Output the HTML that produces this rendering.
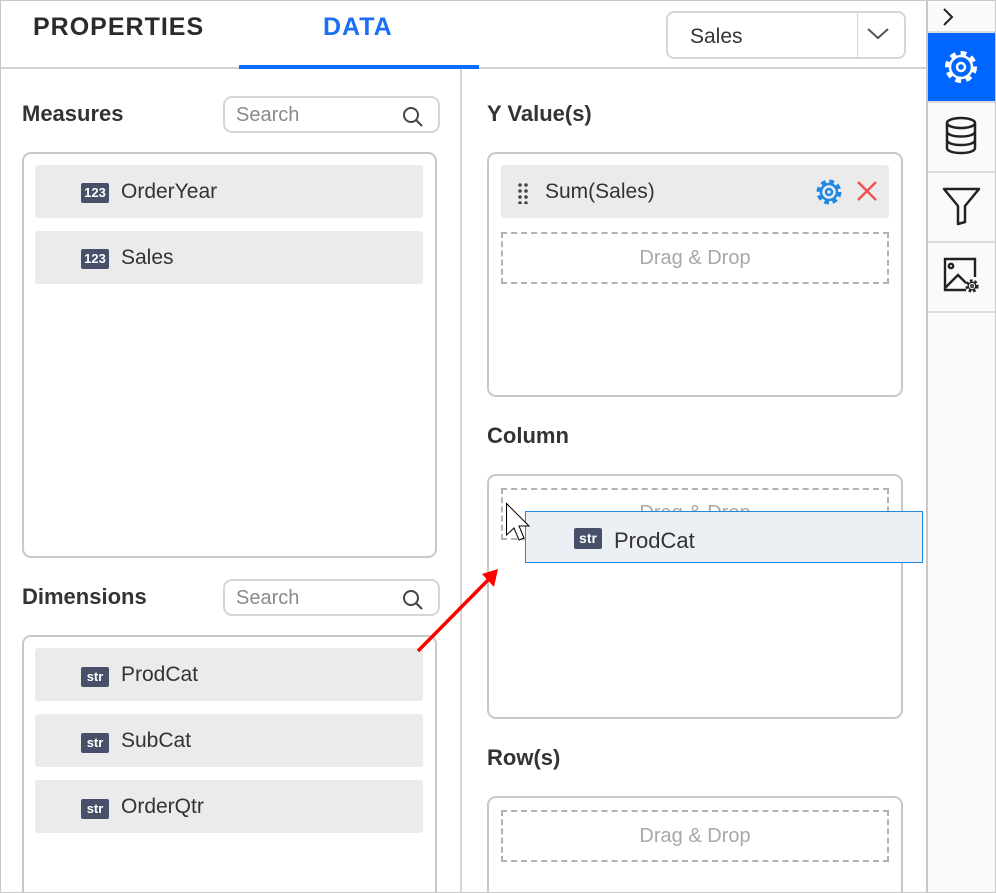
<!DOCTYPE html>
<html style="width:996px;height:893px;overflow:hidden"><head><meta charset="utf-8"><style>
*{box-sizing:border-box;margin:0;padding:0}
body{width:996px;height:893px;overflow:hidden;background:#fff;font-family:"Liberation Sans",Roboto,sans-serif;color:#333;position:relative}
.a{position:absolute}
.frame{left:0;top:0;width:996px;height:893px;border:1px solid #c8c8c8;z-index:5;pointer-events:none}
.tab{font-size:25px;font-weight:bold;letter-spacing:1px;top:13px}
.h{font-size:22px;font-weight:bold;color:#333}
.search{width:217px;height:37px;border:2px solid #d6d6d6;border-radius:9px;font-size:20px;color:#8a8a8a;padding:6px 0 0 11px}
.box{border:2px solid #c8c8c8;border-radius:9px}
.item{background:#ebebeb;border-radius:3px;height:53px;font-size:21px;color:#333;padding:15px 0 0 86px}
.ic{position:absolute;left:46px;top:19px;width:28px;height:20px;background:#475068;color:#fff;font-size:13px;font-weight:bold;text-align:center;line-height:20px;border-radius:2px}
.dd{border:2px dashed #b2b2b2;height:52px;font-size:20px;color:#a8a8a8;text-align:center;line-height:48px}
.side{left:926px;top:0;width:70px;height:893px;background:#fafafa;border-left:2px solid #c8c8c8}
.sl{left:0;width:68px;height:2px;background:#dcdcdc}
</style></head><body>
<div class="a frame"></div>
<div class="a" style="left:1px;top:67px;width:925px;height:2px;background:#d2d2d2"></div>
<div class="a tab" style="left:33px;color:#2b2b2b">PROPERTIES</div>
<div class="a tab" style="left:323px;color:#1a6ff5">DATA</div>
<div class="a" style="left:239px;top:65px;width:240px;height:4px;background:#0d6efd"></div>
<div class="a" style="left:666px;top:11px;width:240px;height:48px;border:2px solid #d6d6d6;border-radius:8px;font-size:21px;color:#333;padding:12px 0 0 22px">Sales
<div class="a" style="left:189px;top:0;width:1px;height:44px;background:#d6d6d6"></div>
<svg class="a" style="left:198px;top:13px" width="24" height="16" viewBox="0 0 24 16"><path d="M2 3 L12 12 L22 3" fill="none" stroke="#555" stroke-width="2"/></svg></div>
<div class="a" style="left:460px;top:69px;width:2px;height:824px;background:#d6d6d6"></div>

<div class="a h" style="left:22px;top:101px">Measures</div>
<div class="a search" style="left:223px;top:96px">Search<svg class="a" style="left:177px;top:8px" width="22" height="22" viewBox="0 0 22 22"><circle cx="9" cy="9" r="7" fill="none" stroke="#444" stroke-width="2"/><path d="M14 14 L20 20" stroke="#444" stroke-width="2"/></svg></div>
<div class="a box" style="left:22px;top:152px;width:415px;height:406px"></div>
<div class="a item" style="left:35px;top:165px;width:388px"><span class="ic" style="top:18px">123</span>OrderYear</div>
<div class="a item" style="left:35px;top:231px;width:388px"><span class="ic" style="top:18px">123</span>Sales</div>

<div class="a h" style="left:22px;top:584px">Dimensions</div>
<div class="a search" style="left:223px;top:579px">Search<svg class="a" style="left:177px;top:8px" width="22" height="22" viewBox="0 0 22 22"><circle cx="9" cy="9" r="7" fill="none" stroke="#444" stroke-width="2"/><path d="M14 14 L20 20" stroke="#444" stroke-width="2"/></svg></div>
<div class="a box" style="left:22px;top:635px;width:415px;height:258px;border-bottom:none;border-radius:9px 9px 0 0"></div>
<div class="a item" style="left:35px;top:648px;width:388px"><span class="ic">str</span>ProdCat</div>
<div class="a item" style="left:35px;top:714px;width:388px"><span class="ic">str</span>SubCat</div>
<div class="a item" style="left:35px;top:780px;width:388px"><span class="ic">str</span>OrderQtr</div>

<div class="a h" style="left:487px;top:101px">Y Value(s)</div>
<div class="a box" style="left:487px;top:152px;width:416px;height:245px"></div>
<div class="a item" style="left:501px;top:165px;width:388px;padding-left:44px">Sum(Sales)
<svg class="a" style="left:16px;top:17px" width="12" height="22" viewBox="0 0 12 22"><g fill="#444"><circle cx="3" cy="3" r="1.8"/><circle cx="9" cy="3" r="1.8"/><circle cx="3" cy="9" r="1.8"/><circle cx="9" cy="9" r="1.8"/><circle cx="3" cy="15" r="1.8"/><circle cx="9" cy="15" r="1.8"/><circle cx="3" cy="21" r="1.8"/><circle cx="9" cy="21" r="1.8"/></g></svg>
<svg class="a" style="left:314px;top:13px" width="28" height="28" viewBox="0 0 28 28"><circle cx="14" cy="14" r="10" fill="none" stroke="#1e88e5" stroke-width="5" stroke-dasharray="4.4 3.45"/><circle cx="14" cy="14" r="8" fill="none" stroke="#1e88e5" stroke-width="2.5"/><circle cx="14" cy="14" r="3" fill="none" stroke="#1e88e5" stroke-width="2.5"/></svg>
<svg class="a" style="left:355px;top:15px" width="22" height="22" viewBox="0 0 22 22"><path d="M2 2 L20 20 M20 2 L2 20" stroke="#f05050" stroke-width="2.4"/></svg></div>
<div class="a dd" style="left:501px;top:232px;width:388px">Drag &amp; Drop</div>

<div class="a h" style="left:487px;top:423px">Column</div>
<div class="a box" style="left:487px;top:474px;width:416px;height:245px"></div>
<div class="a dd" style="left:501px;top:488px;width:388px;overflow:hidden;line-height:46px">Drag &amp; Drop</div>
<div class="a" style="left:525px;top:511px;width:398px;height:52px;background:#eceff3;border:1px solid #1e88e5;font-size:22px;color:#333;padding:16px 0 0 88px"><span class="ic" style="left:48px;top:16px;width:28px;height:21px;font-size:14px">str</span>ProdCat</div>
<svg class="a" style="left:505px;top:502px" width="28" height="40" viewBox="0 0 28 40"><path d="M1.5 1.5 L1.5 33 L9 26 L14 38 L19 36 L14 24 L24 24 Z" fill="#fff" stroke="#000" stroke-width="1"/></svg>
<svg class="a" style="left:410px;top:560px" width="95" height="100" viewBox="0 0 95 100"><path d="M8 91 L78 20" stroke="#f00" stroke-width="3.5"/><path d="M88 9 L72 14 L84 27 Z" fill="#f00"/></svg>

<div class="a h" style="left:487px;top:745px">Row(s)</div>
<div class="a box" style="left:487px;top:796px;width:416px;height:97px;border-bottom:none;border-radius:9px 9px 0 0"></div>
<div class="a dd" style="left:501px;top:810px;width:388px">Drag &amp; Drop</div>

<div class="a side">
<svg class="a" style="left:13px;top:7px" width="14" height="20" viewBox="0 0 14 20"><path d="M3 2 L11 10 L3 18" fill="none" stroke="#222" stroke-width="2"/></svg>
<div class="a sl" style="top:31px"></div>
<div class="a" style="left:0;top:33px;width:68px;height:68px;background:#0066ff"></div>
<svg class="a" style="left:14px;top:48px" width="38" height="38" viewBox="0 0 38 38"><circle cx="19" cy="19" r="13.5" fill="none" stroke="#fff" stroke-width="5" stroke-dasharray="5.6 4.9"/><circle cx="19" cy="19" r="11" fill="#0066ff" stroke="#fff" stroke-width="2.5"/><circle cx="19" cy="19" r="4" fill="none" stroke="#fff" stroke-width="2.5"/></svg>
<div class="a sl" style="top:101px"></div>
<svg class="a" style="left:16px;top:116px" width="34" height="40" viewBox="0 0 34 40"><g fill="none" stroke="#222" stroke-width="2.5"><ellipse cx="17" cy="7" rx="14" ry="5"/><path d="M3 7 V32 C3 35 9 37 17 37 C25 37 31 35 31 32 V7"/><path d="M3 15.5 C3 18.5 9 20.5 17 20.5 C25 20.5 31 18.5 31 15.5"/><path d="M3 24 C3 27 9 29 17 29 C25 29 31 27 31 24"/></g></svg>
<div class="a sl" style="top:171px"></div>
<svg class="a" style="left:14px;top:186px" width="40" height="40" viewBox="0 0 40 40"><path d="M2 3 H37 L23 20 V36 L16 38 V20 Z" fill="none" stroke="#222" stroke-width="2.5" stroke-linejoin="round"/></svg>
<div class="a sl" style="top:241px"></div>
<svg class="a" style="left:14px;top:256px" width="40" height="40" viewBox="0 0 40 40"><g fill="none" stroke="#222" stroke-width="2.4"><path d="M24 34 H3 V3 H33 V21"/><circle cx="9" cy="10" r="2.2"/><path d="M3 32 L16 19 L24 27"/><circle cx="30" cy="30" r="5" stroke-width="3.2" stroke-dasharray="2.4 1.9"/><circle cx="30" cy="30" r="3.8" stroke-width="1.4"/><circle cx="30" cy="30" r="1.3" stroke-width="1.3"/></g></svg>
<div class="a sl" style="top:311px"></div>
</div>
</body></html>
